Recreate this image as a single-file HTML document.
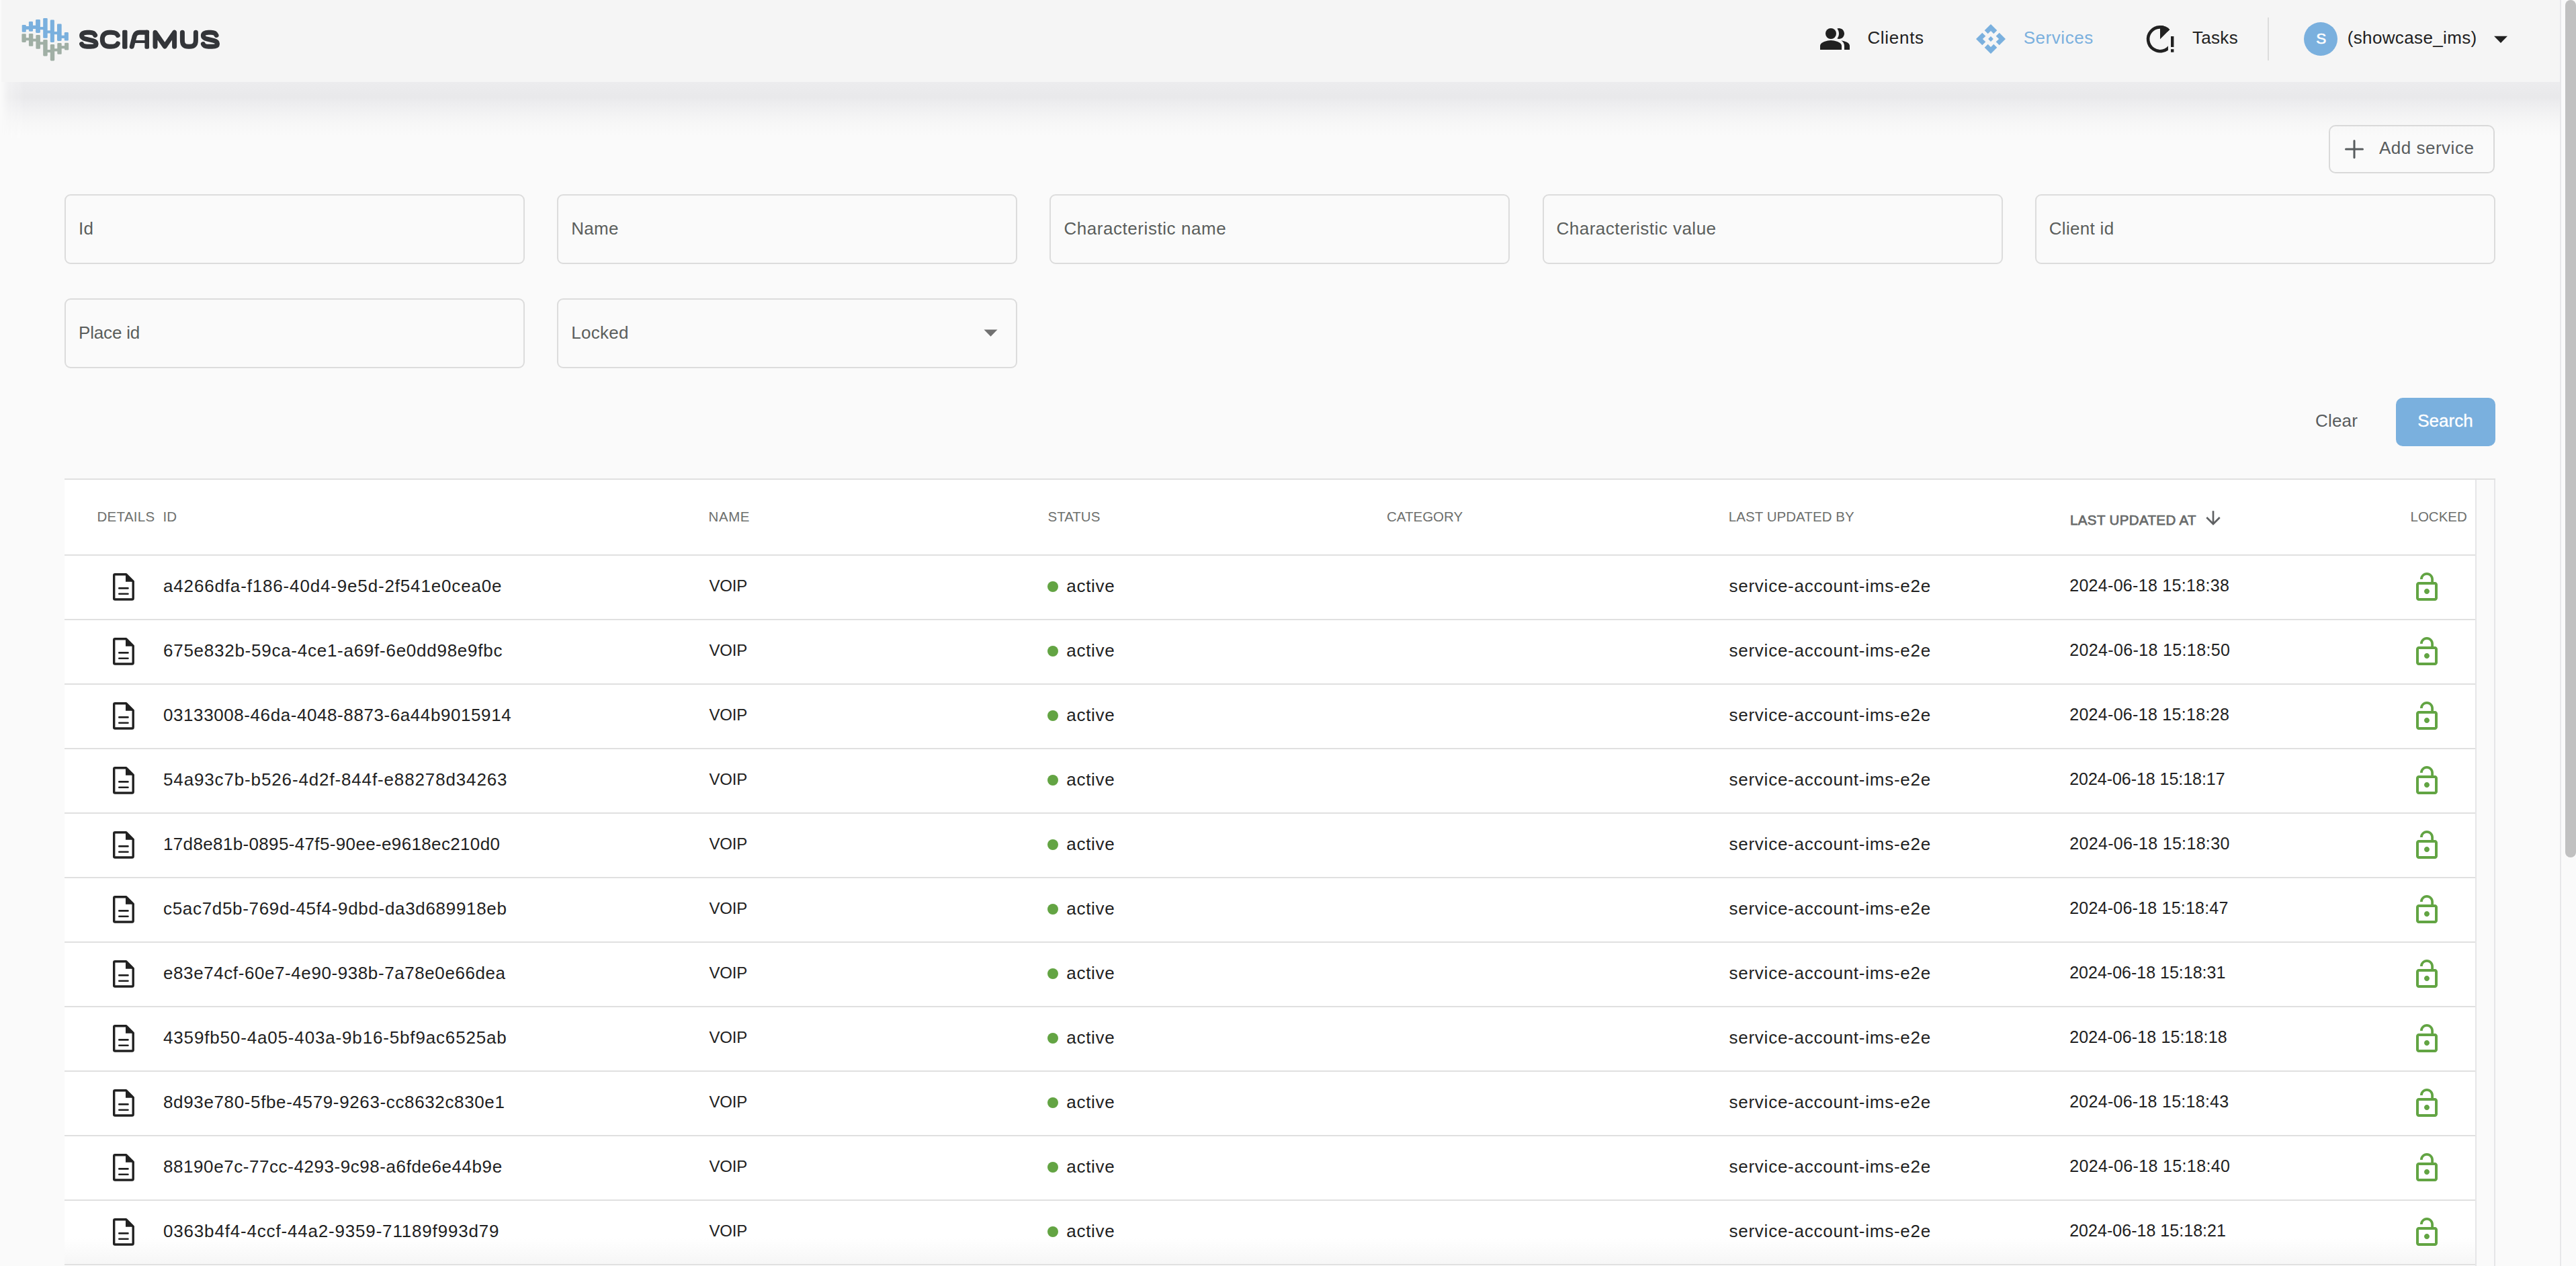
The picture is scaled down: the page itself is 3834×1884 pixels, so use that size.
<!DOCTYPE html>
<html><head><meta charset="utf-8"><title>Services</title>
<style>
html,body{margin:0;padding:0;}
body{width:3834px;height:1884px;overflow:hidden;position:relative;background:#fafafa;font-family:"Liberation Sans", sans-serif;}
.abs{position:absolute;}
.t{position:absolute;white-space:pre;}
#hdr{position:absolute;left:0;top:0;width:3810px;height:122px;background:#f5f5f5;}
#shadow{position:absolute;left:0;top:122px;width:3810px;height:84px;background:linear-gradient(to bottom,#ececee 0px,#eaeaec 14px,#e9e9eb 20px,#e9e9eb 24px,#ededef 32px,#f2f2f3 46px,#f7f7f7 62px,#fafafa 80px);-webkit-mask-image:linear-gradient(to right,transparent 2px,rgba(0,0,0,.6) 12px,#000 36px);}
.fld{border:2px solid #dcdcdc;border-radius:9px;}
.btn-out{border:2px solid #d9d9d9;border-radius:10px;}
</style></head><body>
<div id="hdr"></div><div id="shadow"></div><div class="abs" style="left:0;top:0;width:2px;height:210px;background:#fafafa"></div>
<svg class="abs" style="left:28px;top:22px" width="80" height="74" viewBox="0 0 80 74"><rect x="4.4" y="28.3" width="6.40" height="12.60" rx="1.3" fill="#a0afa5"/><rect x="14.9" y="28" width="6.40" height="18.80" rx="1.3" fill="#a0afa5"/><rect x="25.4" y="30.1" width="6.50" height="20.70" rx="1.3" fill="#a0afa5"/><rect x="36.2" y="37.1" width="6.50" height="24.30" rx="1.3" fill="#a0afa5"/><rect x="46.8" y="44.1" width="6.40" height="24.30" rx="1.3" fill="#a0afa5"/><rect x="57.3" y="42.1" width="6.40" height="16.60" rx="1.3" fill="#a0afa5"/><rect x="68.1" y="41.8" width="6.10" height="10.80" rx="1.3" fill="#a0afa5"/><rect x="9.80" y="34.2" width="6.10" height="4.10" fill="#a0afa5"/><rect x="20.30" y="35.6" width="6.10" height="4.10" fill="#a0afa5"/><rect x="30.90" y="40.3" width="6.30" height="4.10" fill="#a0afa5"/><rect x="41.70" y="52" width="6.10" height="4.10" fill="#a0afa5"/><rect x="52.20" y="50.3" width="6.10" height="4.10" fill="#a0afa5"/><rect x="62.70" y="46.2" width="6.40" height="4.10" fill="#a0afa5"/><rect x="4.7" y="14.9" width="6.10" height="10.80" rx="1.3" fill="#7ab0de"/><rect x="14.9" y="9.9" width="6.10" height="14.90" rx="1.3" fill="#7ab0de"/><rect x="25.1" y="7" width="6.80" height="19.90" rx="1.3" fill="#7ab0de"/><rect x="36.2" y="5" width="6.50" height="29.80" rx="1.3" fill="#7ab0de"/><rect x="46.8" y="7.6" width="6.10" height="33.30" rx="1.3" fill="#7ab0de"/><rect x="57" y="13.4" width="6.70" height="25.50" rx="1.3" fill="#7ab0de"/><rect x="67.8" y="26" width="6.10" height="12.60" rx="1.3" fill="#7ab0de"/><rect x="9.80" y="17" width="6.10" height="4.90" fill="#7ab0de"/><rect x="20.00" y="15.8" width="6.10" height="5.20" fill="#7ab0de"/><rect x="30.90" y="18.1" width="6.30" height="4.10" fill="#7ab0de"/><rect x="41.70" y="23.4" width="6.10" height="4.10" fill="#7ab0de"/><rect x="51.90" y="25.1" width="6.10" height="4.10" fill="#7ab0de"/><rect x="62.70" y="30.7" width="6.10" height="4.30" fill="#7ab0de"/></svg>
<svg class="abs" style="left:0;top:0" width="400" height="122" viewBox="0 0 400 122"><g fill="none" stroke="#333539" stroke-width="7" stroke-linecap="round" stroke-linejoin="round"><path d="M141.60 52.4 C140.50 49.6 137.50 48.2 133.50 48.2 L129.50 48.2 C124.50 48.2 121.60 50 121.60 53.2 C121.60 56 124.00 57.2 128.00 58.2 L137.50 60.4 C141.00 61.3 143.10 62.8 143.10 65.2 C143.10 68 140.00 69.3 135.00 69.3 L129.50 69.3 C125.00 69.3 122.50 68 121.60 65.6"/><path d="M175.3 52.6 C174 49.6 170.5 48.2 165.5 48.2 L162.5 48.2 C155.8 48.2 152.3 52 152.3 58.75 C152.3 65.5 155.8 69.3 162.5 69.3 L165.5 69.3 C170.5 69.3 174 67.9 175.3 64.9"/><path d="M218.7 48.2 L207.5 48.2 C203.5 48.2 201.3 50.3 200.3 53.5 L196.2 69.3"/><path d="M231 69.3 L231 48.2 L245.3 69 L259.6 48.2 L259.6 69.3"/><path d="M271.4 48.2 L271.4 60 C271.4 66.3 274.2 69.3 280.2 69.3 L282.5 69.3 C288.5 69.3 291.4 66.3 291.4 60 L291.4 48.2"/><path d="M322.05 52.4 C320.96 49.6 318.01 48.2 314.07 48.2 L310.13 48.2 C305.20 48.2 302.35 50 302.35 53.2 C302.35 56 304.71 57.2 308.65 58.2 L318.01 60.4 C321.46 61.3 323.52 62.8 323.52 65.2 C323.52 68 320.47 69.3 315.55 69.3 L310.13 69.3 C305.69 69.3 303.23 68 302.35 65.6"/></g><rect x="182.1" y="44.7" width="7.4" height="28.1" rx="2" fill="#333539"/><rect x="215.4" y="44.7" width="6.6" height="28.1" rx="2" fill="#333539"/><rect x="199" y="60" width="18" height="4" fill="#333539"/></svg>
<svg class="abs" style="left:2707px;top:34px" width="48" height="48" viewBox="0 0 24 24" fill="#212121"><path d="M16.67 13.13C18.04 14.06 19 15.32 19 17v3h4v-3c0-2.18-3.57-3.47-6.33-3.87z"/><circle cx="9" cy="8" r="4"/><path d="M15 12c2.21 0 4-1.79 4-4s-1.79-4-4-4c-.47 0-.91.1-1.33.24C14.5 5.27 15 6.58 15 8s-.5 2.73-1.33 3.76c.42.14.86.24 1.33.24z"/><path d="M9 13c-2.67 0-8 1.34-8 4v3h16v-3c0-2.66-5.33-4-8-4z"/></svg>
<div class="t" style="left:2779.40px;top:43.29px;font-size:26px;line-height:26px;color:#212121;letter-spacing:0.7px;">Clients</div>
<svg class="abs" style="left:2933.00px;top:27.90px" width="60" height="60" viewBox="0 0 60 60" fill="#7ab0de"><path d="M30.00 8.00 L39.30 17.30 L34.30 22.30 L30.00 17.90 L25.70 22.30 L20.70 17.30Z"/><path d="M52.00 30.00 L42.70 39.30 L37.70 34.30 L42.10 30.00 L37.70 25.70 L42.70 20.70Z"/><path d="M30.00 52.00 L20.70 42.70 L25.70 37.70 L30.00 42.10 L34.30 37.70 L39.30 42.70Z"/><path d="M8.00 30.00 L17.30 20.70 L22.30 25.70 L17.90 30.00 L22.30 34.30 L17.30 39.30Z"/><path d="M30 26.1 L33.9 30 L30 33.9 L26.1 30Z"/></svg>
<div class="t" style="left:3011.70px;top:43.29px;font-size:26px;line-height:26px;color:#7ab0de;letter-spacing:0.55px;">Services</div>
<svg class="abs" style="left:0;top:0;width:3834px;height:122px" viewBox="0 0 3834 122"><clipPath id="tc"><path d="M3150 0 H3226.9 V122 H3150Z M3226.9 0 H3260 V58.3 H3226.9Z"/></clipPath><path clip-path="url(#tc)" d="M3227.66 45.64 A17.9 17.9 0 1 0 3230.50 67.25" fill="none" stroke="#212121" stroke-width="4.6"/><path d="M3215 58.3 L3215.00 38.10 A20.2 20.2 0 0 1 3229.28 44.02 Z" fill="#212121"/><rect x="3231" y="54" width="4.4" height="16" fill="#212121"/><rect x="3231" y="73.2" width="4.4" height="4.5" fill="#212121"/><rect x="3375" y="26" width="2" height="64" fill="#dcdcdc"/><circle cx="3454" cy="58" r="25" fill="#7ab0de"/><path d="M3712 53.7 L3732 53.7 L3722 64 Z" fill="#212121"/></svg>
<div class="t" style="left:3263.00px;top:42.89px;font-size:26px;line-height:26px;color:#212121;letter-spacing:0.3px;">Tasks</div>
<div class="t" style="left:3447.20px;top:47.45px;font-size:22.5px;line-height:22.5px;color:#ffffff;-webkit-text-stroke:0.6px #fff;">S</div>
<div class="t" style="left:3493.70px;top:43.29px;font-size:26px;line-height:26px;color:#212121;letter-spacing:0.36px;">(showcase_ims)</div>
<div class="abs" style="left:3810px;top:0;width:24px;height:1884px;background:#fafafa"></div><div class="abs" style="left:3810px;top:0;width:2px;height:1884px;background:#e8e8ea"></div><div class="abs" style="left:3818px;top:0;width:16px;height:1276px;background:#c1c1c1;border-radius:8px"></div>
<div class="abs btn-out" style="left:3466px;top:186px;width:243px;height:68px"></div>
<svg class="abs" style="left:3490px;top:208px" width="28" height="28" viewBox="0 0 28 28"><path d="M14 1.5V26.5M1.5 14H26.5" stroke="#585c5e" stroke-width="3" stroke-linecap="round"/></svg>
<div class="t" style="left:3541.00px;top:206.99px;font-size:26px;line-height:26px;color:#585c5e;letter-spacing:0.5px;">Add service</div>
<div class="abs fld" style="left:96.0px;top:289px;width:681px;height:100px"></div>
<div class="t" style="left:117.00px;top:327.09px;font-size:26px;line-height:26px;color:#5a5e5c;letter-spacing:0.3px;">Id</div>
<div class="abs fld" style="left:829.2px;top:289px;width:681px;height:100px"></div>
<div class="t" style="left:850.20px;top:327.09px;font-size:26px;line-height:26px;color:#5a5e5c;letter-spacing:0.3px;">Name</div>
<div class="abs fld" style="left:1562.4px;top:289px;width:681px;height:100px"></div>
<div class="t" style="left:1583.40px;top:327.09px;font-size:26px;line-height:26px;color:#5a5e5c;letter-spacing:0.56px;">Characteristic name</div>
<div class="abs fld" style="left:2295.6px;top:289px;width:681px;height:100px"></div>
<div class="t" style="left:2316.60px;top:327.09px;font-size:26px;line-height:26px;color:#5a5e5c;letter-spacing:0.48px;">Characteristic value</div>
<div class="abs fld" style="left:3028.8px;top:289px;width:681px;height:100px"></div>
<div class="t" style="left:3049.80px;top:327.09px;font-size:26px;line-height:26px;color:#5a5e5c;letter-spacing:0.3px;">Client id</div>
<div class="abs fld" style="left:96.0px;top:444px;width:681px;height:100px"></div>
<div class="t" style="left:117.00px;top:482.39px;font-size:26px;line-height:26px;color:#5a5e5c;letter-spacing:-0.17px;">Place id</div>
<div class="abs fld" style="left:829.2px;top:444px;width:681px;height:100px"></div>
<div class="t" style="left:850.20px;top:482.39px;font-size:26px;line-height:26px;color:#5a5e5c;letter-spacing:0.3px;">Locked</div>
<svg class="abs" style="left:1464px;top:490px" width="21" height="11" viewBox="0 0 21 11"><path d="M0.5 0.4 L20.5 0.4 L10.5 10.8 Z" fill="#717171"/></svg>
<div class="t" style="left:3446.00px;top:612.79px;font-size:26px;line-height:26px;color:#585c5e;letter-spacing:0.2px;">Clear</div>
<div class="abs" style="left:3566px;top:592px;width:148px;height:72px;background:#7ab0de;border-radius:10px"></div>
<div class="t" style="left:3598.20px;top:612.79px;font-size:26px;line-height:26px;color:#ffffff;letter-spacing:0.05px;-webkit-text-stroke:0.35px #fff;">Search</div>
<div class="abs" style="left:96px;top:712px;width:3618px;height:1172px;background:#fafafa"></div>
<div class="abs" style="left:96px;top:714px;width:3588px;height:1170px;background:#ffffff"></div>
<div class="abs" style="left:96px;top:712px;width:3618px;height:2px;background:#e0e0e0"></div>
<div class="abs" style="left:3684px;top:714px;width:2px;height:1170px;background:#e6e6e8"></div>
<div class="abs" style="left:3712px;top:714px;width:2px;height:1170px;background:#e6e6e8"></div>
<div class="abs" style="left:96px;top:825px;width:3588px;height:2px;background:#e0e0e0"></div>
<div class="abs" style="left:96px;top:921px;width:3588px;height:2px;background:#e0e0e0"></div>
<div class="abs" style="left:96px;top:1017px;width:3588px;height:2px;background:#e0e0e0"></div>
<div class="abs" style="left:96px;top:1113px;width:3588px;height:2px;background:#e0e0e0"></div>
<div class="abs" style="left:96px;top:1209px;width:3588px;height:2px;background:#e0e0e0"></div>
<div class="abs" style="left:96px;top:1305px;width:3588px;height:2px;background:#e0e0e0"></div>
<div class="abs" style="left:96px;top:1401px;width:3588px;height:2px;background:#e0e0e0"></div>
<div class="abs" style="left:96px;top:1497px;width:3588px;height:2px;background:#e0e0e0"></div>
<div class="abs" style="left:96px;top:1593px;width:3588px;height:2px;background:#e0e0e0"></div>
<div class="abs" style="left:96px;top:1689px;width:3588px;height:2px;background:#e0e0e0"></div>
<div class="abs" style="left:96px;top:1785px;width:3588px;height:2px;background:#e0e0e0"></div>
<div class="abs" style="left:96px;top:1881px;width:3588px;height:2px;background:#e0e0e0"></div>
<div class="abs" style="left:96px;top:1842px;width:3588px;height:39px;background:linear-gradient(to bottom,#ffffff,#f6f6f6)"></div>
<div class="t" style="left:144.50px;top:758.65px;font-size:20.5px;line-height:20.5px;color:#6d6f6d;letter-spacing:0.3px;">DETAILS</div>
<div class="t" style="left:242.50px;top:758.65px;font-size:20.5px;line-height:20.5px;color:#6d6f6d;">ID</div>
<div class="t" style="left:1054.50px;top:758.65px;font-size:20.5px;line-height:20.5px;color:#6d6f6d;letter-spacing:0.6px;">NAME</div>
<div class="t" style="left:1559.50px;top:758.65px;font-size:20.5px;line-height:20.5px;color:#6d6f6d;">STATUS</div>
<div class="t" style="left:2064.00px;top:758.65px;font-size:20.5px;line-height:20.5px;color:#6d6f6d;">CATEGORY</div>
<div class="t" style="left:2572.70px;top:758.65px;font-size:20.5px;line-height:20.5px;color:#6d6f6d;letter-spacing:0.07px;">LAST UPDATED BY</div>
<div class="t" style="left:3081.00px;top:763.95px;font-size:20.5px;line-height:20.5px;color:#686a6a;letter-spacing:0.38px;-webkit-text-stroke:0.75px #686a6a;">LAST UPDATED AT</div>
<svg class="abs" style="left:3278px;top:755px" width="32" height="32" viewBox="0 0 24 24"><path d="M20 12l-1.41-1.41L13 16.17V4h-2v12.17l-5.58-5.59L4 12l8 8 8-8z" fill="#5f6163"/></svg>
<div class="t" style="left:3587.50px;top:758.65px;font-size:20.5px;line-height:20.5px;color:#6d6f6d;">LOCKED</div>
<svg class="abs" style="left:160px;top:850px" width="48" height="48" viewBox="0 0 48 48"><path d="M11.2 4.7 H27.7 L38.2 15.2 V40.2 Q38.2 42 36.4 42 H11.2 Q9.7 42 9.7 40.5 V6.2 Q9.7 4.7 11.2 4.7Z" fill="none" stroke="#212121" stroke-width="3.4" stroke-linejoin="round"/><path d="M27 4 L39.8 15.8 L27 15.8Z" fill="#212121"/><path d="M17.3 25.4 H30.5 M17.3 33.7 H30.5" stroke="#212121" stroke-width="2.6" stroke-linecap="round"/></svg>
<div class="t" style="left:243.00px;top:858.59px;font-size:26px;line-height:26px;color:#212121;letter-spacing:0.837px;">a4266dfa-f186-40d4-9e5d-2f541e0cea0e</div>
<div class="t" style="left:1055.50px;top:860.28px;font-size:24px;line-height:24px;color:#212121;letter-spacing:-0.2px;">VOIP</div>
<div class="abs" style="left:1559px;top:865px;width:16px;height:16px;border-radius:50%;background:#63a443"></div>
<div class="t" style="left:1587.30px;top:858.59px;font-size:26px;line-height:26px;color:#212121;letter-spacing:0.7px;">active</div>
<div class="t" style="left:2573.50px;top:858.59px;font-size:26px;line-height:26px;color:#212121;letter-spacing:0.75px;">service-account-ims-e2e</div>
<div class="t" style="left:3080.20px;top:859.44px;font-size:25px;line-height:25px;color:#212121;letter-spacing:0.303px;">2024-06-18 15:18:38</div>
<svg class="abs" style="left:3587.6px;top:850px" width="48" height="48" viewBox="0 0 24 24"><path d="M12 17c1.1 0 2-.9 2-2s-.9-2-2-2-2 .9-2 2 .9 2 2 2zm6-9h-1V6c0-2.76-2.24-5-5-5S7 3.24 7 6h1.9c0-1.71 1.39-3.1 3.1-3.1 1.71 0 3.1 1.39 3.1 3.1v2H6c-1.1 0-2 .9-2 2v10c0 1.1.9 2 2 2h12c1.1 0 2-.9 2-2V10c0-1.1-.9-2-2-2zm0 12H6V10h12v10z" fill="#62a443"/></svg>
<svg class="abs" style="left:160px;top:946px" width="48" height="48" viewBox="0 0 48 48"><path d="M11.2 4.7 H27.7 L38.2 15.2 V40.2 Q38.2 42 36.4 42 H11.2 Q9.7 42 9.7 40.5 V6.2 Q9.7 4.7 11.2 4.7Z" fill="none" stroke="#212121" stroke-width="3.4" stroke-linejoin="round"/><path d="M27 4 L39.8 15.8 L27 15.8Z" fill="#212121"/><path d="M17.3 25.4 H30.5 M17.3 33.7 H30.5" stroke="#212121" stroke-width="2.6" stroke-linecap="round"/></svg>
<div class="t" style="left:243.00px;top:954.59px;font-size:26px;line-height:26px;color:#212121;letter-spacing:0.74px;">675e832b-59ca-4ce1-a69f-6e0dd98e9fbc</div>
<div class="t" style="left:1055.50px;top:956.28px;font-size:24px;line-height:24px;color:#212121;letter-spacing:-0.2px;">VOIP</div>
<div class="abs" style="left:1559px;top:961px;width:16px;height:16px;border-radius:50%;background:#63a443"></div>
<div class="t" style="left:1587.30px;top:954.59px;font-size:26px;line-height:26px;color:#212121;letter-spacing:0.7px;">active</div>
<div class="t" style="left:2573.50px;top:954.59px;font-size:26px;line-height:26px;color:#212121;letter-spacing:0.75px;">service-account-ims-e2e</div>
<div class="t" style="left:3080.20px;top:955.44px;font-size:25px;line-height:25px;color:#212121;letter-spacing:0.364px;">2024-06-18 15:18:50</div>
<svg class="abs" style="left:3587.6px;top:946px" width="48" height="48" viewBox="0 0 24 24"><path d="M12 17c1.1 0 2-.9 2-2s-.9-2-2-2-2 .9-2 2 .9 2 2 2zm6-9h-1V6c0-2.76-2.24-5-5-5S7 3.24 7 6h1.9c0-1.71 1.39-3.1 3.1-3.1 1.71 0 3.1 1.39 3.1 3.1v2H6c-1.1 0-2 .9-2 2v10c0 1.1.9 2 2 2h12c1.1 0 2-.9 2-2V10c0-1.1-.9-2-2-2zm0 12H6V10h12v10z" fill="#62a443"/></svg>
<svg class="abs" style="left:160px;top:1042px" width="48" height="48" viewBox="0 0 48 48"><path d="M11.2 4.7 H27.7 L38.2 15.2 V40.2 Q38.2 42 36.4 42 H11.2 Q9.7 42 9.7 40.5 V6.2 Q9.7 4.7 11.2 4.7Z" fill="none" stroke="#212121" stroke-width="3.4" stroke-linejoin="round"/><path d="M27 4 L39.8 15.8 L27 15.8Z" fill="#212121"/><path d="M17.3 25.4 H30.5 M17.3 33.7 H30.5" stroke="#212121" stroke-width="2.6" stroke-linecap="round"/></svg>
<div class="t" style="left:243.00px;top:1050.59px;font-size:26px;line-height:26px;color:#212121;letter-spacing:0.58px;">03133008-46da-4048-8873-6a44b9015914</div>
<div class="t" style="left:1055.50px;top:1052.28px;font-size:24px;line-height:24px;color:#212121;letter-spacing:-0.2px;">VOIP</div>
<div class="abs" style="left:1559px;top:1057px;width:16px;height:16px;border-radius:50%;background:#63a443"></div>
<div class="t" style="left:1587.30px;top:1050.59px;font-size:26px;line-height:26px;color:#212121;letter-spacing:0.7px;">active</div>
<div class="t" style="left:2573.50px;top:1050.59px;font-size:26px;line-height:26px;color:#212121;letter-spacing:0.75px;">service-account-ims-e2e</div>
<div class="t" style="left:3080.20px;top:1051.44px;font-size:25px;line-height:25px;color:#212121;letter-spacing:0.303px;">2024-06-18 15:18:28</div>
<svg class="abs" style="left:3587.6px;top:1042px" width="48" height="48" viewBox="0 0 24 24"><path d="M12 17c1.1 0 2-.9 2-2s-.9-2-2-2-2 .9-2 2 .9 2 2 2zm6-9h-1V6c0-2.76-2.24-5-5-5S7 3.24 7 6h1.9c0-1.71 1.39-3.1 3.1-3.1 1.71 0 3.1 1.39 3.1 3.1v2H6c-1.1 0-2 .9-2 2v10c0 1.1.9 2 2 2h12c1.1 0 2-.9 2-2V10c0-1.1-.9-2-2-2zm0 12H6V10h12v10z" fill="#62a443"/></svg>
<svg class="abs" style="left:160px;top:1138px" width="48" height="48" viewBox="0 0 48 48"><path d="M11.2 4.7 H27.7 L38.2 15.2 V40.2 Q38.2 42 36.4 42 H11.2 Q9.7 42 9.7 40.5 V6.2 Q9.7 4.7 11.2 4.7Z" fill="none" stroke="#212121" stroke-width="3.4" stroke-linejoin="round"/><path d="M27 4 L39.8 15.8 L27 15.8Z" fill="#212121"/><path d="M17.3 25.4 H30.5 M17.3 33.7 H30.5" stroke="#212121" stroke-width="2.6" stroke-linecap="round"/></svg>
<div class="t" style="left:243.00px;top:1146.59px;font-size:26px;line-height:26px;color:#212121;letter-spacing:0.86px;">54a93c7b-b526-4d2f-844f-e88278d34263</div>
<div class="t" style="left:1055.50px;top:1148.28px;font-size:24px;line-height:24px;color:#212121;letter-spacing:-0.2px;">VOIP</div>
<div class="abs" style="left:1559px;top:1153px;width:16px;height:16px;border-radius:50%;background:#63a443"></div>
<div class="t" style="left:1587.30px;top:1146.59px;font-size:26px;line-height:26px;color:#212121;letter-spacing:0.7px;">active</div>
<div class="t" style="left:2573.50px;top:1146.59px;font-size:26px;line-height:26px;color:#212121;letter-spacing:0.75px;">service-account-ims-e2e</div>
<div class="t" style="left:3080.20px;top:1147.44px;font-size:25px;line-height:25px;color:#212121;letter-spacing:-0.041px;">2024-06-18 15:18:17</div>
<svg class="abs" style="left:3587.6px;top:1138px" width="48" height="48" viewBox="0 0 24 24"><path d="M12 17c1.1 0 2-.9 2-2s-.9-2-2-2-2 .9-2 2 .9 2 2 2zm6-9h-1V6c0-2.76-2.24-5-5-5S7 3.24 7 6h1.9c0-1.71 1.39-3.1 3.1-3.1 1.71 0 3.1 1.39 3.1 3.1v2H6c-1.1 0-2 .9-2 2v10c0 1.1.9 2 2 2h12c1.1 0 2-.9 2-2V10c0-1.1-.9-2-2-2zm0 12H6V10h12v10z" fill="#62a443"/></svg>
<svg class="abs" style="left:160px;top:1234px" width="48" height="48" viewBox="0 0 48 48"><path d="M11.2 4.7 H27.7 L38.2 15.2 V40.2 Q38.2 42 36.4 42 H11.2 Q9.7 42 9.7 40.5 V6.2 Q9.7 4.7 11.2 4.7Z" fill="none" stroke="#212121" stroke-width="3.4" stroke-linejoin="round"/><path d="M27 4 L39.8 15.8 L27 15.8Z" fill="#212121"/><path d="M17.3 25.4 H30.5 M17.3 33.7 H30.5" stroke="#212121" stroke-width="2.6" stroke-linecap="round"/></svg>
<div class="t" style="left:243.00px;top:1242.59px;font-size:26px;line-height:26px;color:#212121;letter-spacing:0.351px;">17d8e81b-0895-47f5-90ee-e9618ec210d0</div>
<div class="t" style="left:1055.50px;top:1244.28px;font-size:24px;line-height:24px;color:#212121;letter-spacing:-0.2px;">VOIP</div>
<div class="abs" style="left:1559px;top:1249px;width:16px;height:16px;border-radius:50%;background:#63a443"></div>
<div class="t" style="left:1587.30px;top:1242.59px;font-size:26px;line-height:26px;color:#212121;letter-spacing:0.7px;">active</div>
<div class="t" style="left:2573.50px;top:1242.59px;font-size:26px;line-height:26px;color:#212121;letter-spacing:0.75px;">service-account-ims-e2e</div>
<div class="t" style="left:3080.20px;top:1243.44px;font-size:25px;line-height:25px;color:#212121;letter-spacing:0.331px;">2024-06-18 15:18:30</div>
<svg class="abs" style="left:3587.6px;top:1234px" width="48" height="48" viewBox="0 0 24 24"><path d="M12 17c1.1 0 2-.9 2-2s-.9-2-2-2-2 .9-2 2 .9 2 2 2zm6-9h-1V6c0-2.76-2.24-5-5-5S7 3.24 7 6h1.9c0-1.71 1.39-3.1 3.1-3.1 1.71 0 3.1 1.39 3.1 3.1v2H6c-1.1 0-2 .9-2 2v10c0 1.1.9 2 2 2h12c1.1 0 2-.9 2-2V10c0-1.1-.9-2-2-2zm0 12H6V10h12v10z" fill="#62a443"/></svg>
<svg class="abs" style="left:160px;top:1330px" width="48" height="48" viewBox="0 0 48 48"><path d="M11.2 4.7 H27.7 L38.2 15.2 V40.2 Q38.2 42 36.4 42 H11.2 Q9.7 42 9.7 40.5 V6.2 Q9.7 4.7 11.2 4.7Z" fill="none" stroke="#212121" stroke-width="3.4" stroke-linejoin="round"/><path d="M27 4 L39.8 15.8 L27 15.8Z" fill="#212121"/><path d="M17.3 25.4 H30.5 M17.3 33.7 H30.5" stroke="#212121" stroke-width="2.6" stroke-linecap="round"/></svg>
<div class="t" style="left:243.00px;top:1338.59px;font-size:26px;line-height:26px;color:#212121;letter-spacing:0.677px;">c5ac7d5b-769d-45f4-9dbd-da3d689918eb</div>
<div class="t" style="left:1055.50px;top:1340.28px;font-size:24px;line-height:24px;color:#212121;letter-spacing:-0.2px;">VOIP</div>
<div class="abs" style="left:1559px;top:1345px;width:16px;height:16px;border-radius:50%;background:#63a443"></div>
<div class="t" style="left:1587.30px;top:1338.59px;font-size:26px;line-height:26px;color:#212121;letter-spacing:0.7px;">active</div>
<div class="t" style="left:2573.50px;top:1338.59px;font-size:26px;line-height:26px;color:#212121;letter-spacing:0.75px;">service-account-ims-e2e</div>
<div class="t" style="left:3080.20px;top:1339.44px;font-size:25px;line-height:25px;color:#212121;letter-spacing:0.226px;">2024-06-18 15:18:47</div>
<svg class="abs" style="left:3587.6px;top:1330px" width="48" height="48" viewBox="0 0 24 24"><path d="M12 17c1.1 0 2-.9 2-2s-.9-2-2-2-2 .9-2 2 .9 2 2 2zm6-9h-1V6c0-2.76-2.24-5-5-5S7 3.24 7 6h1.9c0-1.71 1.39-3.1 3.1-3.1 1.71 0 3.1 1.39 3.1 3.1v2H6c-1.1 0-2 .9-2 2v10c0 1.1.9 2 2 2h12c1.1 0 2-.9 2-2V10c0-1.1-.9-2-2-2zm0 12H6V10h12v10z" fill="#62a443"/></svg>
<svg class="abs" style="left:160px;top:1426px" width="48" height="48" viewBox="0 0 48 48"><path d="M11.2 4.7 H27.7 L38.2 15.2 V40.2 Q38.2 42 36.4 42 H11.2 Q9.7 42 9.7 40.5 V6.2 Q9.7 4.7 11.2 4.7Z" fill="none" stroke="#212121" stroke-width="3.4" stroke-linejoin="round"/><path d="M27 4 L39.8 15.8 L27 15.8Z" fill="#212121"/><path d="M17.3 25.4 H30.5 M17.3 33.7 H30.5" stroke="#212121" stroke-width="2.6" stroke-linecap="round"/></svg>
<div class="t" style="left:243.00px;top:1434.59px;font-size:26px;line-height:26px;color:#212121;letter-spacing:0.583px;">e83e74cf-60e7-4e90-938b-7a78e0e66dea</div>
<div class="t" style="left:1055.50px;top:1436.28px;font-size:24px;line-height:24px;color:#212121;letter-spacing:-0.2px;">VOIP</div>
<div class="abs" style="left:1559px;top:1441px;width:16px;height:16px;border-radius:50%;background:#63a443"></div>
<div class="t" style="left:1587.30px;top:1434.59px;font-size:26px;line-height:26px;color:#212121;letter-spacing:0.7px;">active</div>
<div class="t" style="left:2573.50px;top:1434.59px;font-size:26px;line-height:26px;color:#212121;letter-spacing:0.75px;">service-account-ims-e2e</div>
<div class="t" style="left:3080.20px;top:1435.44px;font-size:25px;line-height:25px;color:#212121;letter-spacing:0.003px;">2024-06-18 15:18:31</div>
<svg class="abs" style="left:3587.6px;top:1426px" width="48" height="48" viewBox="0 0 24 24"><path d="M12 17c1.1 0 2-.9 2-2s-.9-2-2-2-2 .9-2 2 .9 2 2 2zm6-9h-1V6c0-2.76-2.24-5-5-5S7 3.24 7 6h1.9c0-1.71 1.39-3.1 3.1-3.1 1.71 0 3.1 1.39 3.1 3.1v2H6c-1.1 0-2 .9-2 2v10c0 1.1.9 2 2 2h12c1.1 0 2-.9 2-2V10c0-1.1-.9-2-2-2zm0 12H6V10h12v10z" fill="#62a443"/></svg>
<svg class="abs" style="left:160px;top:1522px" width="48" height="48" viewBox="0 0 48 48"><path d="M11.2 4.7 H27.7 L38.2 15.2 V40.2 Q38.2 42 36.4 42 H11.2 Q9.7 42 9.7 40.5 V6.2 Q9.7 4.7 11.2 4.7Z" fill="none" stroke="#212121" stroke-width="3.4" stroke-linejoin="round"/><path d="M27 4 L39.8 15.8 L27 15.8Z" fill="#212121"/><path d="M17.3 25.4 H30.5 M17.3 33.7 H30.5" stroke="#212121" stroke-width="2.6" stroke-linecap="round"/></svg>
<div class="t" style="left:243.00px;top:1530.59px;font-size:26px;line-height:26px;color:#212121;letter-spacing:0.84px;">4359fb50-4a05-403a-9b16-5bf9ac6525ab</div>
<div class="t" style="left:1055.50px;top:1532.28px;font-size:24px;line-height:24px;color:#212121;letter-spacing:-0.2px;">VOIP</div>
<div class="abs" style="left:1559px;top:1537px;width:16px;height:16px;border-radius:50%;background:#63a443"></div>
<div class="t" style="left:1587.30px;top:1530.59px;font-size:26px;line-height:26px;color:#212121;letter-spacing:0.7px;">active</div>
<div class="t" style="left:2573.50px;top:1530.59px;font-size:26px;line-height:26px;color:#212121;letter-spacing:0.75px;">service-account-ims-e2e</div>
<div class="t" style="left:3080.20px;top:1531.44px;font-size:25px;line-height:25px;color:#212121;letter-spacing:0.126px;">2024-06-18 15:18:18</div>
<svg class="abs" style="left:3587.6px;top:1522px" width="48" height="48" viewBox="0 0 24 24"><path d="M12 17c1.1 0 2-.9 2-2s-.9-2-2-2-2 .9-2 2 .9 2 2 2zm6-9h-1V6c0-2.76-2.24-5-5-5S7 3.24 7 6h1.9c0-1.71 1.39-3.1 3.1-3.1 1.71 0 3.1 1.39 3.1 3.1v2H6c-1.1 0-2 .9-2 2v10c0 1.1.9 2 2 2h12c1.1 0 2-.9 2-2V10c0-1.1-.9-2-2-2zm0 12H6V10h12v10z" fill="#62a443"/></svg>
<svg class="abs" style="left:160px;top:1618px" width="48" height="48" viewBox="0 0 48 48"><path d="M11.2 4.7 H27.7 L38.2 15.2 V40.2 Q38.2 42 36.4 42 H11.2 Q9.7 42 9.7 40.5 V6.2 Q9.7 4.7 11.2 4.7Z" fill="none" stroke="#212121" stroke-width="3.4" stroke-linejoin="round"/><path d="M27 4 L39.8 15.8 L27 15.8Z" fill="#212121"/><path d="M17.3 25.4 H30.5 M17.3 33.7 H30.5" stroke="#212121" stroke-width="2.6" stroke-linecap="round"/></svg>
<div class="t" style="left:243.00px;top:1626.59px;font-size:26px;line-height:26px;color:#212121;letter-spacing:0.634px;">8d93e780-5fbe-4579-9263-cc8632c830e1</div>
<div class="t" style="left:1055.50px;top:1628.28px;font-size:24px;line-height:24px;color:#212121;letter-spacing:-0.2px;">VOIP</div>
<div class="abs" style="left:1559px;top:1633px;width:16px;height:16px;border-radius:50%;background:#63a443"></div>
<div class="t" style="left:1587.30px;top:1626.59px;font-size:26px;line-height:26px;color:#212121;letter-spacing:0.7px;">active</div>
<div class="t" style="left:2573.50px;top:1626.59px;font-size:26px;line-height:26px;color:#212121;letter-spacing:0.75px;">service-account-ims-e2e</div>
<div class="t" style="left:3080.20px;top:1627.44px;font-size:25px;line-height:25px;color:#212121;letter-spacing:0.27px;">2024-06-18 15:18:43</div>
<svg class="abs" style="left:3587.6px;top:1618px" width="48" height="48" viewBox="0 0 24 24"><path d="M12 17c1.1 0 2-.9 2-2s-.9-2-2-2-2 .9-2 2 .9 2 2 2zm6-9h-1V6c0-2.76-2.24-5-5-5S7 3.24 7 6h1.9c0-1.71 1.39-3.1 3.1-3.1 1.71 0 3.1 1.39 3.1 3.1v2H6c-1.1 0-2 .9-2 2v10c0 1.1.9 2 2 2h12c1.1 0 2-.9 2-2V10c0-1.1-.9-2-2-2zm0 12H6V10h12v10z" fill="#62a443"/></svg>
<svg class="abs" style="left:160px;top:1714px" width="48" height="48" viewBox="0 0 48 48"><path d="M11.2 4.7 H27.7 L38.2 15.2 V40.2 Q38.2 42 36.4 42 H11.2 Q9.7 42 9.7 40.5 V6.2 Q9.7 4.7 11.2 4.7Z" fill="none" stroke="#212121" stroke-width="3.4" stroke-linejoin="round"/><path d="M27 4 L39.8 15.8 L27 15.8Z" fill="#212121"/><path d="M17.3 25.4 H30.5 M17.3 33.7 H30.5" stroke="#212121" stroke-width="2.6" stroke-linecap="round"/></svg>
<div class="t" style="left:243.00px;top:1722.59px;font-size:26px;line-height:26px;color:#212121;letter-spacing:0.566px;">88190e7c-77cc-4293-9c98-a6fde6e44b9e</div>
<div class="t" style="left:1055.50px;top:1724.28px;font-size:24px;line-height:24px;color:#212121;letter-spacing:-0.2px;">VOIP</div>
<div class="abs" style="left:1559px;top:1729px;width:16px;height:16px;border-radius:50%;background:#63a443"></div>
<div class="t" style="left:1587.30px;top:1722.59px;font-size:26px;line-height:26px;color:#212121;letter-spacing:0.7px;">active</div>
<div class="t" style="left:2573.50px;top:1722.59px;font-size:26px;line-height:26px;color:#212121;letter-spacing:0.75px;">service-account-ims-e2e</div>
<div class="t" style="left:3080.20px;top:1723.44px;font-size:25px;line-height:25px;color:#212121;letter-spacing:0.364px;">2024-06-18 15:18:40</div>
<svg class="abs" style="left:3587.6px;top:1714px" width="48" height="48" viewBox="0 0 24 24"><path d="M12 17c1.1 0 2-.9 2-2s-.9-2-2-2-2 .9-2 2 .9 2 2 2zm6-9h-1V6c0-2.76-2.24-5-5-5S7 3.24 7 6h1.9c0-1.71 1.39-3.1 3.1-3.1 1.71 0 3.1 1.39 3.1 3.1v2H6c-1.1 0-2 .9-2 2v10c0 1.1.9 2 2 2h12c1.1 0 2-.9 2-2V10c0-1.1-.9-2-2-2zm0 12H6V10h12v10z" fill="#62a443"/></svg>
<svg class="abs" style="left:160px;top:1810px" width="48" height="48" viewBox="0 0 48 48"><path d="M11.2 4.7 H27.7 L38.2 15.2 V40.2 Q38.2 42 36.4 42 H11.2 Q9.7 42 9.7 40.5 V6.2 Q9.7 4.7 11.2 4.7Z" fill="none" stroke="#212121" stroke-width="3.4" stroke-linejoin="round"/><path d="M27 4 L39.8 15.8 L27 15.8Z" fill="#212121"/><path d="M17.3 25.4 H30.5 M17.3 33.7 H30.5" stroke="#212121" stroke-width="2.6" stroke-linecap="round"/></svg>
<div class="t" style="left:243.00px;top:1818.59px;font-size:26px;line-height:26px;color:#212121;letter-spacing:0.82px;">0363b4f4-4ccf-44a2-9359-71189f993d79</div>
<div class="t" style="left:1055.50px;top:1820.28px;font-size:24px;line-height:24px;color:#212121;letter-spacing:-0.2px;">VOIP</div>
<div class="abs" style="left:1559px;top:1825px;width:16px;height:16px;border-radius:50%;background:#63a443"></div>
<div class="t" style="left:1587.30px;top:1818.59px;font-size:26px;line-height:26px;color:#212121;letter-spacing:0.7px;">active</div>
<div class="t" style="left:2573.50px;top:1818.59px;font-size:26px;line-height:26px;color:#212121;letter-spacing:0.75px;">service-account-ims-e2e</div>
<div class="t" style="left:3080.20px;top:1819.44px;font-size:25px;line-height:25px;color:#212121;letter-spacing:0.031px;">2024-06-18 15:18:21</div>
<svg class="abs" style="left:3587.6px;top:1810px" width="48" height="48" viewBox="0 0 24 24"><path d="M12 17c1.1 0 2-.9 2-2s-.9-2-2-2-2 .9-2 2 .9 2 2 2zm6-9h-1V6c0-2.76-2.24-5-5-5S7 3.24 7 6h1.9c0-1.71 1.39-3.1 3.1-3.1 1.71 0 3.1 1.39 3.1 3.1v2H6c-1.1 0-2 .9-2 2v10c0 1.1.9 2 2 2h12c1.1 0 2-.9 2-2V10c0-1.1-.9-2-2-2zm0 12H6V10h12v10z" fill="#62a443"/></svg>

</body></html>
